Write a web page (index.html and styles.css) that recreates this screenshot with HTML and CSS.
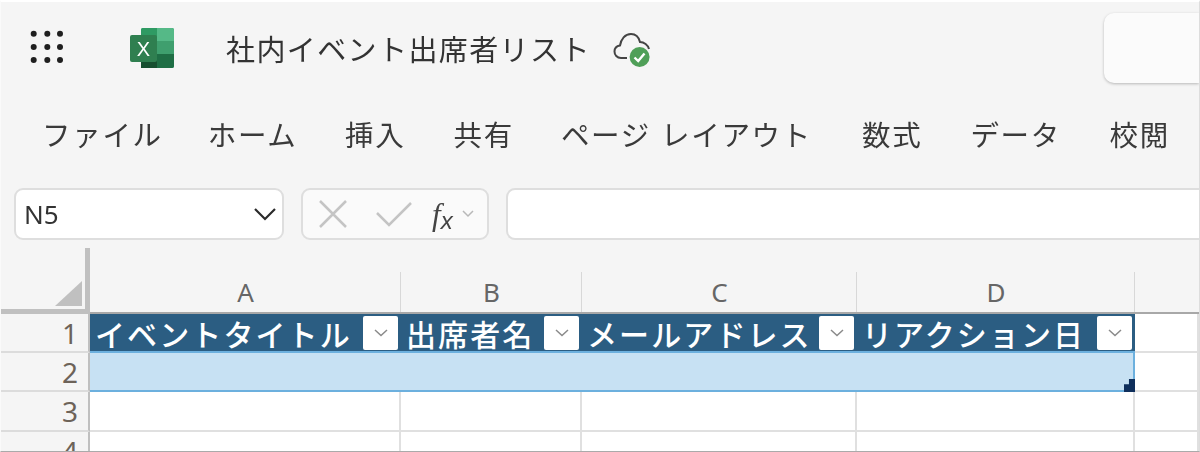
FILE: index.html
```html
<!DOCTYPE html>
<html lang="ja">
<head>
<meta charset="utf-8">
<title>社内イベント出席者リスト</title>
<link rel="stylesheet" href="styles.css">
</head>
<body>
<div class="app">
  <header class="titlebar">
    <svg class="waffle" width="36" height="36" viewBox="0 0 36 36"><g fill="#1f1f1f"><circle cx="3.700" cy="3.700" r="3"/><circle cx="17.300" cy="3.700" r="3"/><circle cx="30" cy="3.700" r="3"/><circle cx="3.700" cy="17" r="3"/><circle cx="17.300" cy="17" r="3"/><circle cx="30" cy="17" r="3"/><circle cx="3.700" cy="30" r="3"/><circle cx="17.300" cy="30" r="3"/><circle cx="30" cy="30" r="3"/></g></svg>
    <svg class="xl" width="44" height="40" viewBox="0 0 44 40">
      <rect x="11" y="0" width="33" height="40" rx="2" fill="#21a366"/>
      <path d="M11 2a2 2 0 0 1 2-2H27V13H11Z" fill="#2f9a63"/>
      <path d="M27 0H42a2 2 0 0 1 2 2V13H27Z" fill="#55b987"/>
      <rect x="27" y="13" width="17" height="13" fill="#3f9f6e"/>
      <rect x="11" y="13" width="16" height="13" fill="#217346"/>
      <rect x="11" y="26" width="16" height="14" fill="#174f30"/>
      <path d="M27 26H44V38a2 2 0 0 1-2 2H27Z" fill="#1f6e45"/>
      <rect x="0" y="7" width="27" height="27" rx="2" fill="#2f7f50"/>
      <text x="13.500" y="28" class="xl-x" text-anchor="middle">X</text>
    </svg>
    <h1 class="doc-title">社内イベント出席者リスト</h1>
    <svg class="cloud" width="38" height="36" viewBox="0 0 38 36">
      <path d="M14 26H8C4 26 1.500 23 1.500 19.500C1.500 16 4 14 7 13.500C8 7 12 2 18 2C23 2 26 6 27 10C31 10 35 13 36 17" fill="none" stroke="#444" stroke-width="2"/>
      <circle cx="26.600" cy="25" r="10" fill="#4f9f58"/>
      <path d="M21.500 25.500L25.200 29L31.500 21.500" fill="none" stroke="#fff" stroke-width="2.400"/>
    </svg>
    <div class="search-box"></div>
  </header>

  <nav class="menu">
    <span class="tab tab-file">ファイル</span>
    <span class="tab tab-home">ホーム</span>
    <span class="tab tab-insert">挿入</span>
    <span class="tab tab-share">共有</span>
    <span class="tab tab-layout">ページ レイアウト</span>
    <span class="tab tab-formula">数式</span>
    <span class="tab tab-data">データ</span>
    <span class="tab">校閲</span>
  </nav>

  <div class="formula-bar">
    <div class="box name-box">
      <span>N5</span>
      <svg width="24" height="14" viewBox="0 0 24 14"><path d="M2 2L12 12L22 2" fill="none" stroke="#2b2b2b" stroke-width="2.200"/></svg>
    </div>
    <div class="box fx-box">
      <svg class="fx-icon" width="28" height="28" viewBox="0 0 28 28"><path d="M1 1L27 27M27 1L1 27" stroke="#c4c4c4" stroke-width="2.500" fill="none"/></svg>
      <svg class="fx-icon check" width="36" height="26" viewBox="0 0 36 26"><path d="M1 12L13 24L35 2" stroke="#c4c4c4" stroke-width="2.500" fill="none"/></svg>
      <span class="fx">f<sub>x</sub></span>
      <svg class="fx-caret" width="12" height="8" viewBox="0 0 12 8"><path d="M1 1L6 6L11 1" fill="none" stroke="#b8b8b8" stroke-width="1.500"/></svg>
    </div>
    <div class="box input-box"></div>
  </div>

  <main class="sheet">
    <div class="corner"><span class="corner-tri"></span></div>
    <div class="col-head">A</div>
    <div class="col-head">B</div>
    <div class="col-head">C</div>
    <div class="col-head">D</div>
    <div class="col-head col-rest"></div>

    <div class="row-head">1</div>
    <div class="th">イベントタイトル<span class="filter"><svg width="14" height="8" viewBox="0 0 14 8"><path d="M1 1L7 6.500L13 1" fill="none" stroke="#8a8a8a" stroke-width="1.500"/></svg></span></div>
    <div class="th">出席者名<span class="filter"><svg width="14" height="8" viewBox="0 0 14 8"><path d="M1 1L7 6.500L13 1" fill="none" stroke="#8a8a8a" stroke-width="1.500"/></svg></span></div>
    <div class="th">メールアドレス<span class="filter"><svg width="14" height="8" viewBox="0 0 14 8"><path d="M1 1L7 6.500L13 1" fill="none" stroke="#8a8a8a" stroke-width="1.500"/></svg></span></div>
    <div class="th">リアクション日<span class="filter"><svg width="14" height="8" viewBox="0 0 14 8"><path d="M1 1L7 6.500L13 1" fill="none" stroke="#8a8a8a" stroke-width="1.500"/></svg></span></div>
    <div class="cell"></div>

    <div class="row-head">2</div>
    <div class="selected"><span class="handle"></span></div>
    <div class="cell"></div>

    <div class="row-head">3</div>
    <div class="cell"></div><div class="cell"></div><div class="cell"></div><div class="cell"></div><div class="cell"></div>

    <div class="row-head">4</div>
    <div class="cell"></div><div class="cell"></div><div class="cell"></div><div class="cell"></div><div class="cell"></div>
  </main>
</div>
</body>
</html>
```
FILE: styles.css
```css
* { box-sizing: border-box; margin: 0; padding: 0; }
html, body { width: 1200px; height: 452px; overflow: hidden; background: #f5f5f5; }
body { font-family: "Noto Sans CJK JP", "Noto Sans", sans-serif; color: #333; }
.app {
  width: 1200px; height: 452px; display: flex; flex-direction: column;
  border-top: 2px solid #fff; border-left: 1px solid #fafafa;
  border-right: 1px solid #ddd; border-bottom: 1px solid #aaa; overflow: hidden;
  filter: blur(.4px);
}

.titlebar { height: 98px; flex: none; display: flex; align-items: center; }
.waffle { margin-left: 29px; margin-top: -6px; flex: none; }
.xl { margin-left: 64px; margin-top: -6px; flex: none; }
.xl-x { font: 400 20px "Liberation Sans", sans-serif; fill: #fff; }
.doc-title { margin-left: 52px; font-size: 29px; font-weight: 400; color: #333; letter-spacing: 1.400px; white-space: nowrap; line-height: 40px; margin-top: -6px; }
.cloud { margin-left: 22px; margin-top: -2px; flex: none; }
.search-box {
  margin-left: auto; margin-top: -6px; width: 95px; height: 70px;
  background: #fbfbfb; border-radius: 10px 0 0 10px; box-shadow: 0 1px 3px rgba(0,0,0,.25);
}

.menu { height: 88px; flex: none; display: flex; align-items: flex-start; padding: 13px 0 0 41px; font-size: 28.500px; letter-spacing: 1.700px; word-spacing: 2px; line-height: 42px; color: #3a3a3a; white-space: nowrap; }
.tab-file { margin-right: 45px; }
.tab-home { margin-right: 47.500px; }
.tab-insert { margin-right: 48px; }
.tab-share { margin-right: 47px; }
.tab-layout { margin-right: 50px; }
.tab-formula { margin-right: 48px; }
.tab-data { margin-right: 48.500px; }

.formula-bar { height: 60px; flex: none; display: flex; gap: 17px; padding-left: 13px; align-items: flex-start; }
.box { height: 52px; background: #fff; border: 2px solid #dedede; border-radius: 9px; display: flex; align-items: center; }
.name-box { width: 270px; justify-content: space-between; padding: 0 5px 0 8px; font-size: 26px; font-family: "Noto Sans", sans-serif; color: #333; }
.fx-box { width: 188px; background: #fafafa; padding-left: 16px; }
.fx-icon { flex: none; }
.check { margin-left: 29px; }
.fx { font: italic 31px "Liberation Serif", serif; color: #444; margin-left: 20px; line-height: 1; }
.fx sub { font-size: 24px; font-family: "Liberation Sans", sans-serif; vertical-align: -4px; line-height: 0; }
.fx-caret { margin-left: 9px; flex: none; }
.input-box { flex: 1; border-right: none; border-radius: 9px 0 0 9px; }

.sheet {
  flex: 1; min-height: 0; display: grid;
  grid-template-columns: 89px 311px 181px 275px 278px 1fr;
  grid-template-rows: 66px 39px 39px 40px 1fr;
  font-family: "Noto Sans", sans-serif; background: #fff;
}
.corner { background: #f5f5f5; border-right: 5px solid #c0c0c0; border-bottom: 5px solid #c0c0c0; display: flex; align-items: flex-end; justify-content: flex-end; padding: 0 3px 3px 0; }
.corner-tri { width: 27px; height: 25px; background: #c0c0c0; clip-path: polygon(100% 0, 100% 100%, 0 100%); }
.col-head {
  background: #f5f5f5; border-bottom: 2px solid #a8a8a8; font-size: 26px; color: #666; text-align: center;
  line-height: 30px; padding-top: 29px; position: relative;
}
.col-head::after { content: ""; position: absolute; right: 0; top: 24px; bottom: 0; width: 1px; background: #d8d8d8; }
.col-rest::after { display: none; }
.row-head { background: #f5f5f5; border-right: 2px solid #c0c0c0; border-bottom: 2px solid #dcdcdc; font-size: 28px; color: #6d6359; text-align: right; padding-right: 10px; line-height: 38px; }
.th {
  background: #2b5d82; color: #fff; font-family: "Noto Sans CJK JP", sans-serif; font-size: 30px; font-weight: 500; letter-spacing: 2.100px;
  display: flex; align-items: center; justify-content: space-between; padding: 0 3px 0 5px; white-space: nowrap; border-bottom: 2px solid #6cb0de; line-height: 36px; min-width: 0;
}
.filter { width: 35px; height: 34px; margin-top: 1px; background: #fff; border-radius: 2px; display: flex; align-items: center; justify-content: center; flex: none; letter-spacing: 0; }
.cell { background: #fff; border-right: 2px solid #e0e0e0; border-bottom: 2px solid #e0e0e0; }
.selected { grid-column: span 4; background: #c7e1f3; border-right: 2px solid #6cb0de; border-bottom: 2px solid #6cb0de; position: relative; }
.handle { position: absolute; right: -2px; bottom: -2px; width: 11px; height: 13px; background: #0f2f5c; clip-path: polygon(45% 0, 100% 0, 100% 100%, 0 100%, 0 40%, 45% 40%); }
```
